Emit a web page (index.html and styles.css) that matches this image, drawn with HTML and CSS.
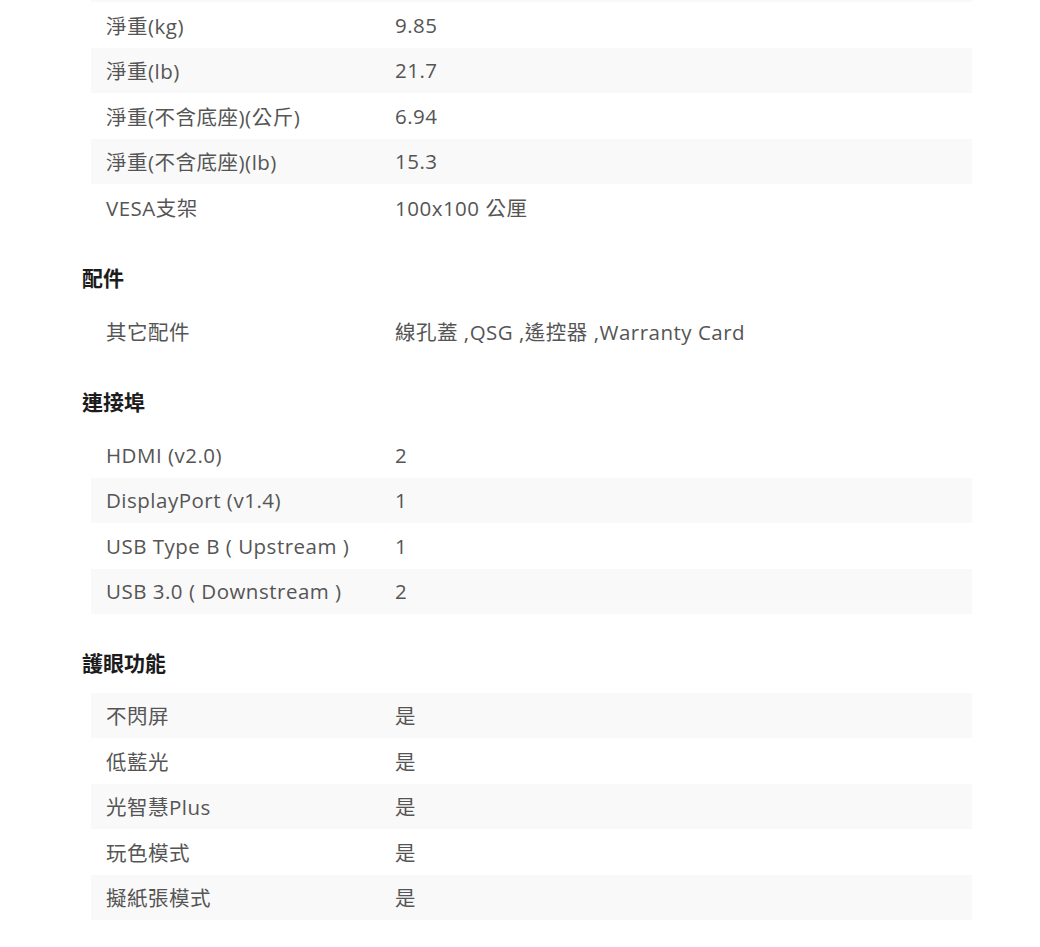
FILE: index.html
```html
<!DOCTYPE html>
<html lang="zh-Hant">
<head>
<meta charset="utf-8">
<title>規格</title>
<link rel="stylesheet" href="styles.css">
</head>
<body>
<div class="page">
  <section class="spec spec-first">
    <div class="row alt"><div class="label"></div><div class="value"></div></div>
    <div class="row"><div class="label">淨重(kg)</div><div class="value">9.85</div></div>
    <div class="row alt"><div class="label">淨重(lb)</div><div class="value">21.7</div></div>
    <div class="row"><div class="label">淨重(不含底座)(公斤)</div><div class="value">6.94</div></div>
    <div class="row alt"><div class="label">淨重(不含底座)(lb)</div><div class="value">15.3</div></div>
    <div class="row"><div class="label">VESA支架</div><div class="value">100x100 公厘</div></div>
  </section>

  <section class="spec">
    <h2 class="heading">配件</h2>
    <div class="row"><div class="label">其它配件</div><div class="value">線孔蓋 ,QSG ,遙控器 ,Warranty Card</div></div>
  </section>

  <section class="spec">
    <h2 class="heading">連接埠</h2>
    <div class="row"><div class="label">HDMI (v2.0)</div><div class="value">2</div></div>
    <div class="row alt"><div class="label">DisplayPort (v1.4)</div><div class="value">1</div></div>
    <div class="row"><div class="label">USB Type B ( Upstream )</div><div class="value">1</div></div>
    <div class="row alt"><div class="label">USB 3.0 ( Downstream )</div><div class="value">2</div></div>
  </section>

  <section class="spec">
    <h2 class="heading">護眼功能</h2>
    <div class="row alt"><div class="label">不閃屏</div><div class="value">是</div></div>
    <div class="row"><div class="label">低藍光</div><div class="value">是</div></div>
    <div class="row alt"><div class="label">光智慧Plus</div><div class="value">是</div></div>
    <div class="row"><div class="label">玩色模式</div><div class="value">是</div></div>
    <div class="row alt"><div class="label">擬紙張模式</div><div class="value">是</div></div>
  </section>
</div>
</body>
</html>
```

FILE: styles.css
```css
html, body {
  margin: 0;
  padding: 0;
  background: #ffffff;
}

body {
  font-family: "Open Sans", "Noto Sans CJK TC", sans-serif;
  color: #555555;
}

.page {
  width: 890px;
  padding-left: 82px;
}

.spec-first {
  margin-top: -43.5px;
}

.heading {
  margin: 0;
  padding: 32.5px 0 16px 0;
  font-size: 21px;
  line-height: 30px;
  font-weight: 700;
  color: #1c1c1c;
  font-family: "Noto Sans CJK TC", sans-serif;
}

.row {
  display: flex;
  align-items: center;
  height: 45.5px;
  margin-left: 9px;
  width: 881px;
  font-size: 20.5px;
  letter-spacing: 0.5px;
}

.row.alt {
  background: #f9f9f9;
}

.label {
  width: 289px;
  padding-left: 15px;
  white-space: nowrap;
}

.value {
  flex: 1;
  white-space: nowrap;
}
```
